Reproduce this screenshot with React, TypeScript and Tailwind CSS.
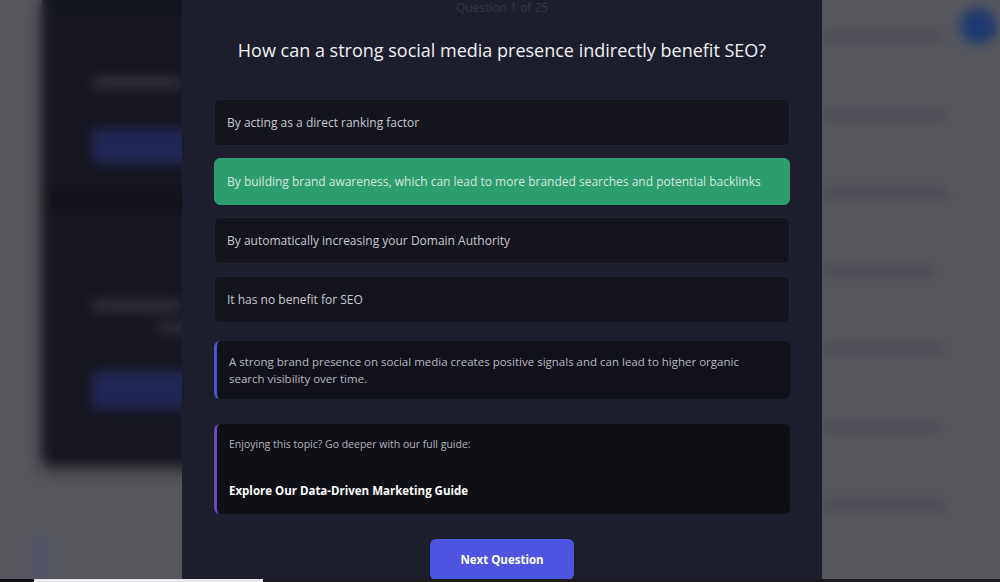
import { useState } from 'react';

interface Option {
  id: string;
  label: string;
}

const options: Option[] = [
  { id: 'a', label: 'By acting as a direct ranking factor' },
  { id: 'b', label: 'By building brand awareness, which can lead to more branded searches and potential backlinks' },
  { id: 'c', label: 'By automatically increasing your Domain Authority' },
  { id: 'd', label: 'It has no benefit for SEO' },
];

const correctId = 'b';

// Page content that sits behind the quiz dialog
function BackdropPage() {
  const sideRows = [120, 124, 126, 112, 122, 118, 124];

  return (
    <div className="absolute inset-0 flex">
      <div className="w-[42px] shrink-0" />
      <div className="w-[220px] shrink-0 flex flex-col">
        <div className="h-[465px] bg-[#15161f] rounded-b-lg shadow-[0_6px_14px_rgba(0,0,0,0.45)] flex flex-col pl-[50px]">
          <div className="mt-[78px] h-[10px] w-[90px] rounded bg-[#33343e]" />
          <div className="mt-[40px] h-[36px] w-[160px] rounded-md bg-[#222656]" />
          <div className="mt-[30px] h-[14px] -ml-[50px] bg-[#111219]" />
          <div className="mt-[93px] h-[10px] w-[90px] rounded bg-[#33343e]" />
          <div className="mt-[12px] ml-[66px] h-[10px] w-[30px] rounded bg-[#2f303a]" />
          <div className="mt-[38px] h-[38px] w-[160px] rounded-md bg-[#222656]" />
        </div>
        <div className="mt-[70px] ml-[-6px] h-[44px] w-[8px] rounded bg-[#4d5170]" />
      </div>
      <div className="flex-1" />
      <div className="w-[178px] shrink-0 flex">
        <div className="flex flex-col pt-[32px] gap-[68px]">
          {sideRows.map((w, i) => (
            <div key={i} className="h-[10px] rounded bg-[#4b4c53]" style={{ width: w }} />
          ))}
        </div>
        <div className="ml-auto mt-[8px] mr-[4px] h-[36px] w-[36px] rounded-full bg-[#1d3a70]" />
      </div>
    </div>
  );
}

export default function App() {
  const [selected, setSelected] = useState<string>(correctId);

  return (
    <div className="relative w-[1000px] h-[582px] overflow-hidden bg-[#56575d] font-['Open_Sans',sans-serif]">
      <BackdropPage />
      {/* frosted overlay */}
      <div className="absolute inset-0 backdrop-blur-[6px]" />

      {/* Quiz dialog */}
      <div className="absolute left-[182px] top-0 w-[640px] h-[582px] bg-[#1d1e2b] px-8 flex flex-col">
        <p className="pt-[1px] text-center text-[12px] leading-[14px] text-[#34364a]">Question 1 of 25</p>
        <h2 className="mt-[23px] text-center text-[18px] leading-[24px] text-[#f1f1f5]">
          How can a strong social media presence indirectly benefit SEO?
        </h2>

        <div className="mt-[37px] flex flex-col gap-3">
          {options.map((opt) => {
            const isCorrect = selected === opt.id && opt.id === correctId;
            return (
              <button
                key={opt.id}
                onClick={() => setSelected(opt.id)}
                className={`h-[47px] rounded-md px-3 flex items-center text-left text-[12px] whitespace-nowrap border ${
                  isCorrect
                    ? 'bg-[#2d9c6f] border-[#2d9c6f] text-[#d3e9de]'
                    : 'bg-[#13141c] border-[#22232f] text-[#c9c9d2]'
                }`}
              >
                {opt.label}
              </button>
            );
          })}
        </div>

        {/* Explanation */}
        <div className="mt-[18px] rounded-md border-l-[3px] border-[#4b55d6] bg-[#111219] pl-3 pr-4 py-3 text-[11.5px] leading-[17px] text-[#b9b9c4]">
          A strong brand presence on social media creates positive signals and can lead to higher organic search
          visibility over time.
        </div>

        {/* Related guide */}
        <div className="mt-[25px] rounded-md border-l-[3px] border-[#6c48c4] bg-[#0f1016] pl-3 pr-4 pt-3 pb-[14px]">
          <p className="text-[10.5px] leading-[16px] text-[#b3b3be]">Enjoying this topic? Go deeper with our full guide:</p>
          <p className="mt-[30px] text-[11.5px] leading-[18px] font-bold text-white">Explore Our Data-Driven Marketing Guide</p>
        </div>

        <button className="mt-[25px] self-center w-[144px] h-[41px] shrink-0 rounded-md bg-[#4d55e0] text-[11.5px] font-bold text-white">
          Next Question
        </button>
      </div>

      {/* bottom browser strip */}
      <div className="absolute left-0 bottom-0 w-full h-[3px] flex">
        <div className="w-[34px] bg-[#111]" />
        <div className="w-[229px] bg-[#e9e9ec]" />
        <div className="flex-1 bg-[#1a1a1f]" />
      </div>
    </div>
  );
}
